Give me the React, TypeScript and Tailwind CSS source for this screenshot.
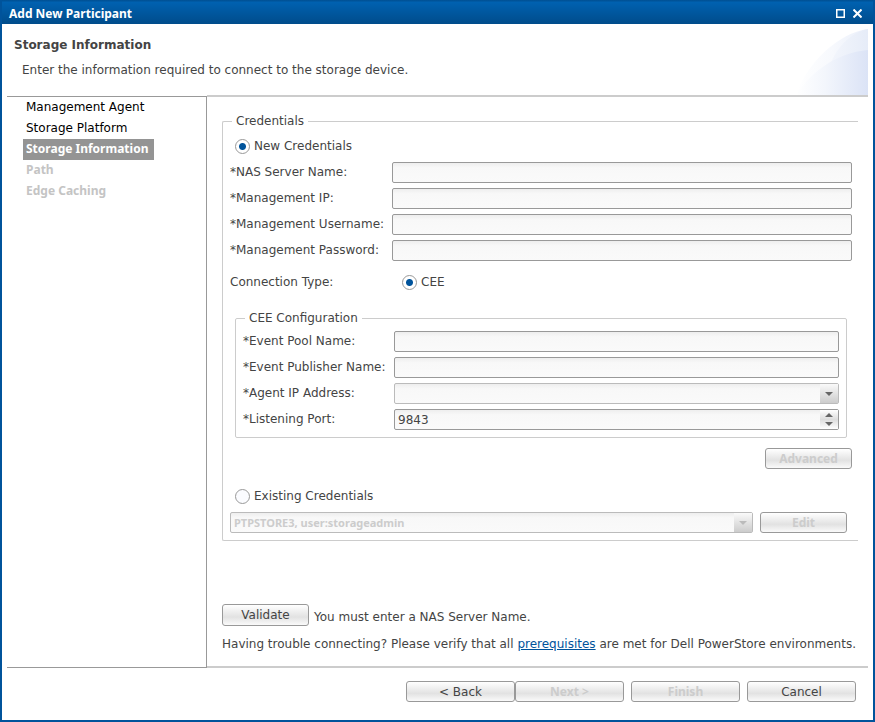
import { useId, useState } from 'react';
import type { ReactNode } from 'react';
import clsx from 'clsx';

const steps = [
  { name: 'Management Agent', state: 'done' },
  { name: 'Storage Platform', state: 'done' },
  { name: 'Storage Information', state: 'current' },
  { name: 'Path', state: 'disabled' },
  { name: 'Edge Caching', state: 'disabled' },
];

const fieldClass =
  'block h-[21px] w-full rounded-[2px] border border-[#999] bg-linear-to-b from-[#eeeeee] via-[#f8f8f8] via-25% to-[#fafafa] px-[3px] outline-none';

const radioClass =
  'm-0 h-[15px] w-[15px] shrink-0 appearance-none rounded-full border border-[#999] bg-[#fbfcff] checked:bg-[radial-gradient(circle,#00539b_3px,#ffffff_4px)]';

interface ButtonProps {
  children: ReactNode;
  className?: string;
  disabled?: boolean;
}

function Button({ children, className, disabled }: ButtonProps) {
  return (
    <button
      type="button"
      disabled={disabled}
      className={clsx(
        'flex shrink-0 items-center justify-center rounded-[3px] border border-[#999] bg-linear-to-b from-white via-[#e2e2e2] via-60% to-[#fafafa]',
        disabled ? 'font-[Noto_Sans,sans-serif] font-bold text-[#cccccc]' : 'text-[#444444]',
        className
      )}
    >
      {children}
    </button>
  );
}

function Arrow({ up = false }: { up?: boolean }) {
  return (
    <svg width="8" height="4" viewBox="0 0 8 4" fill="currentColor" aria-hidden="true">
      <path d={up ? 'M4 0 8 4H0Z' : 'M0 0H8L4 4Z'} />
    </svg>
  );
}

function SelectArrow() {
  return (
    <span className="pointer-events-none absolute inset-y-px right-px flex w-[18px] items-center justify-center bg-linear-to-b from-[#fafafa] to-[#cccccc]">
      <Arrow />
    </span>
  );
}

interface FieldProps {
  label: string;
  labelClass: string;
  children: (id: string) => ReactNode;
}

function Field({ label, labelClass, children }: FieldProps) {
  const id = useId();
  return (
    <div className="flex">
      <label htmlFor={id} className={clsx('shrink-0 whitespace-nowrap leading-[21px]', labelClass)}>
        *{label}
      </label>
      <div className="relative min-w-0 flex-1">{children(id)}</div>
    </div>
  );
}

function HeaderArt() {
  return (
    <svg className="absolute right-[5px] bottom-0 h-[66px] w-[74px]" viewBox="0 0 74 66" aria-hidden="true">
      <defs>
        <linearGradient id="outer" x1="0" x2="1">
          <stop offset="0" stopColor="#ffffff" />
          <stop offset="0.5" stopColor="#f7f9fd" />
          <stop offset="1" stopColor="#eaeffa" />
        </linearGradient>
        <linearGradient id="leaf" x1="0" x2="1">
          <stop offset="0" stopColor="#f3f6fc" />
          <stop offset="1" stopColor="#e6ecf8" />
        </linearGradient>
        <linearGradient id="inner" x1="0" x2="1">
          <stop offset="0" stopColor="#ffffff" />
          <stop offset="0.4" stopColor="#f3f6fc" />
          <stop offset="1" stopColor="#dbe3f6" />
        </linearGradient>
      </defs>
      <path d="M2 66C13 34 44 4 74 0V66Z" fill="url(#outer)" />
      <path d="M36 36C43 18 56 4 74 0V36Z" fill="url(#leaf)" />
      <path d="M2 66C18 42 42 24 74 21V66Z" fill="url(#inner)" />
    </svg>
  );
}

export default function App() {
  const [credentials, setCredentials] = useState('new');
  const [port, setPort] = useState(9843);

  return (
    <div className="flex min-h-screen flex-col border-2 border-t-0 border-[#00539b] bg-white font-[DejaVu_Sans,sans-serif] text-[12px] leading-4 text-[#444444]">
      <header className="flex h-6 items-center justify-between bg-linear-to-b from-[#004f91] via-[#0061b0] via-10% to-[#004c8b] pr-[11px] pl-[7px] pt-[3px] text-white">
        <h1 className="font-[Noto_Sans,sans-serif] font-bold">Add New Participant</h1>
        <div className="flex gap-2">
          <button type="button" aria-label="Maximize">
            <svg width="9" height="9" viewBox="0 0 9 9" fill="none" stroke="currentColor" strokeWidth="1.5">
              <path d="M.75 .75H8.25V8.25H.75Z" />
            </svg>
          </button>
          <button type="button" aria-label="Close">
            <svg width="9" height="9" viewBox="0 0 9 9" fill="none" stroke="currentColor" strokeWidth="2">
              <path d="M.5 .5 8.5 8.5M8.5 .5 .5 8.5" />
            </svg>
          </button>
        </div>
      </header>

      <div className="relative h-[71px] shrink-0 pt-[13px] pl-3">
        <h2 className="font-bold">Storage Information</h2>
        <p className="mt-[9px] ml-2">Enter the information required to connect to the storage device.</p>
        <HeaderArt />
      </div>

      <div className="flex flex-1 px-[5px]">
        <nav className="mt-px w-[200px] shrink-0 border-y border-r border-[#999]">
          <ul className="ml-4">
            {steps.map((step) => (
              <li
                key={step.name}
                aria-current={step.state === 'current' ? 'step' : undefined}
                className={clsx(
                  'h-[21px] w-fit pr-[6px] pl-[3px]',
                  step.state === 'done' && 'leading-[21px] text-black',
                  step.state === 'current' &&
                    'bg-[#949494] font-[Noto_Sans,sans-serif] leading-[19px] font-bold text-white',
                  step.state === 'disabled' &&
                    'font-[Noto_Sans,sans-serif] leading-[19px] font-bold text-[#c4c4c4]'
                )}
              >
                {step.name}
              </li>
            ))}
          </ul>
        </nav>

        <main className="min-w-0 flex-1 border-y-2 border-[#cccccc] pt-4 pr-[10px] pb-[14px] pl-[15px]">
          <fieldset className="min-w-0 rounded-l-[2px] border border-r-0 border-[#cccccc] pr-[6px] pb-[7px] pl-[7px]">
            <legend className="ml-[2px] px-1">Credentials</legend>
            <label className="mt-[9px] ml-[5px] flex w-fit items-center gap-1">
              <input
                type="radio"
                name="credentials"
                className={radioClass}
                checked={credentials === 'new'}
                onChange={() => setCredentials('new')}
              />
              New Credentials
            </label>

            <div className="mt-2 flex flex-col gap-[5px]">
              <Field label="NAS Server Name:" labelClass="w-[162px]">
                {(id) => <input id={id} type="text" className={fieldClass} />}
              </Field>
              <Field label="Management IP:" labelClass="w-[162px]">
                {(id) => <input id={id} type="text" className={fieldClass} />}
              </Field>
              <Field label="Management Username:" labelClass="w-[162px]">
                {(id) => <input id={id} type="text" className={fieldClass} />}
              </Field>
              <Field label="Management Password:" labelClass="w-[162px]">
                {(id) => <input id={id} type="password" className={fieldClass} />}
              </Field>
            </div>

            <div className="mt-[13px] flex items-center" role="radiogroup" aria-label="Connection Type">
              <span className="w-[172px]">Connection Type:</span>
              <label className="flex items-center gap-1">
                <input type="radio" name="connection" className={radioClass} defaultChecked />
                CEE
              </label>
            </div>

            <fieldset className="mx-[5px] mt-5 min-w-0 rounded-[2px] border border-[#cccccc] px-[7px] pb-[7px]">
              <legend className="ml-[2px] px-1">CEE Configuration</legend>
              <div className="mt-[5px] flex flex-col gap-[5px]">
                <Field label="Event Pool Name:" labelClass="w-[151px]">
                  {(id) => <input id={id} type="text" className={fieldClass} />}
                </Field>
                <Field label="Event Publisher Name:" labelClass="w-[151px]">
                  {(id) => <input id={id} type="text" className={fieldClass} />}
                </Field>
                <Field label="Agent IP Address:" labelClass="w-[151px]">
                  {(id) => (
                    <div className="relative text-[#666666]">
                      <select id={id} className={clsx(fieldClass, 'appearance-none border-[#bbbbbb]')} />
                      <SelectArrow />
                    </div>
                  )}
                </Field>
                <Field label="Listening Port:" labelClass="w-[151px]">
                  {(id) => (
                    <>
                      <input
                        id={id}
                        type="number"
                        className={clsx(
                          fieldClass,
                          'appearance-none [appearance:textfield] [&::-webkit-inner-spin-button]:appearance-none'
                        )}
                        value={port}
                        onChange={(e) => setPort(Number(e.target.value))}
                      />
                      <div className="absolute inset-y-px right-px flex w-[18px] flex-col bg-linear-to-b from-white via-[#dddddd] to-white text-[#666666]">
                        <button
                          type="button"
                          aria-label="Increase port"
                          className="flex flex-1 items-center justify-center"
                          onClick={() => setPort(port + 1)}
                        >
                          <Arrow up />
                        </button>
                        <button
                          type="button"
                          aria-label="Decrease port"
                          className="flex flex-1 items-center justify-center"
                          onClick={() => setPort(port - 1)}
                        >
                          <Arrow />
                        </button>
                      </div>
                    </>
                  )}
                </Field>
              </div>
            </fieldset>

            <div className="mt-[10px] flex justify-end">
              <Button className="h-[21px] w-[87px]" disabled>
                Advanced
              </Button>
            </div>

            <label className="mt-[19px] ml-[5px] flex w-fit items-center gap-1">
              <input
                type="radio"
                name="credentials"
                className={radioClass}
                checked={credentials === 'existing'}
                onChange={() => setCredentials('existing')}
              />
              Existing Credentials
            </label>
            <div className="mt-2 mr-[5px] flex gap-[7px]">
              <div className="relative min-w-0 flex-1 text-[#bbbbbb]">
                <select
                  disabled
                  aria-label="Existing Credentials"
                  className={clsx(
                    fieldClass,
                    'appearance-none border-[#bbbbbb] font-[Noto_Sans,sans-serif] text-[11px] font-bold text-[#cccccc] opacity-100'
                  )}
                >
                  <option>PTPSTORE3, user:storageadmin</option>
                </select>
                <SelectArrow />
              </div>
              <Button className="h-[21px] w-[87px]" disabled>
                Edit
              </Button>
            </div>
          </fieldset>

          <div className="mt-[63px] flex items-center gap-[5px]">
            <Button className="h-[22px] w-[87px]">Validate</Button>
            <p className="pt-[3px]">You must enter a NAS Server Name.</p>
          </div>
          <p className="mt-[10px] whitespace-nowrap">
            Having trouble connecting? Please verify that all{' '}
            <a href="#prerequisites" className="text-[#00539b] underline">
              prerequisites
            </a>{' '}
            are met for Dell PowerStore environments.
          </p>
        </main>
      </div>

      <footer className="flex justify-end gap-[7px] px-[17px] pt-[13px] pb-[18px]">
        <div className="flex">
          <Button className="h-[21px] w-[109px]">&lt; Back</Button>
          <Button className="h-[21px] w-[109px]" disabled>
            Next &gt;
          </Button>
        </div>
        <Button className="h-[21px] w-[109px]" disabled>
          Finish
        </Button>
        <Button className="h-[21px] w-[109px]">Cancel</Button>
      </footer>
    </div>
  );
}
